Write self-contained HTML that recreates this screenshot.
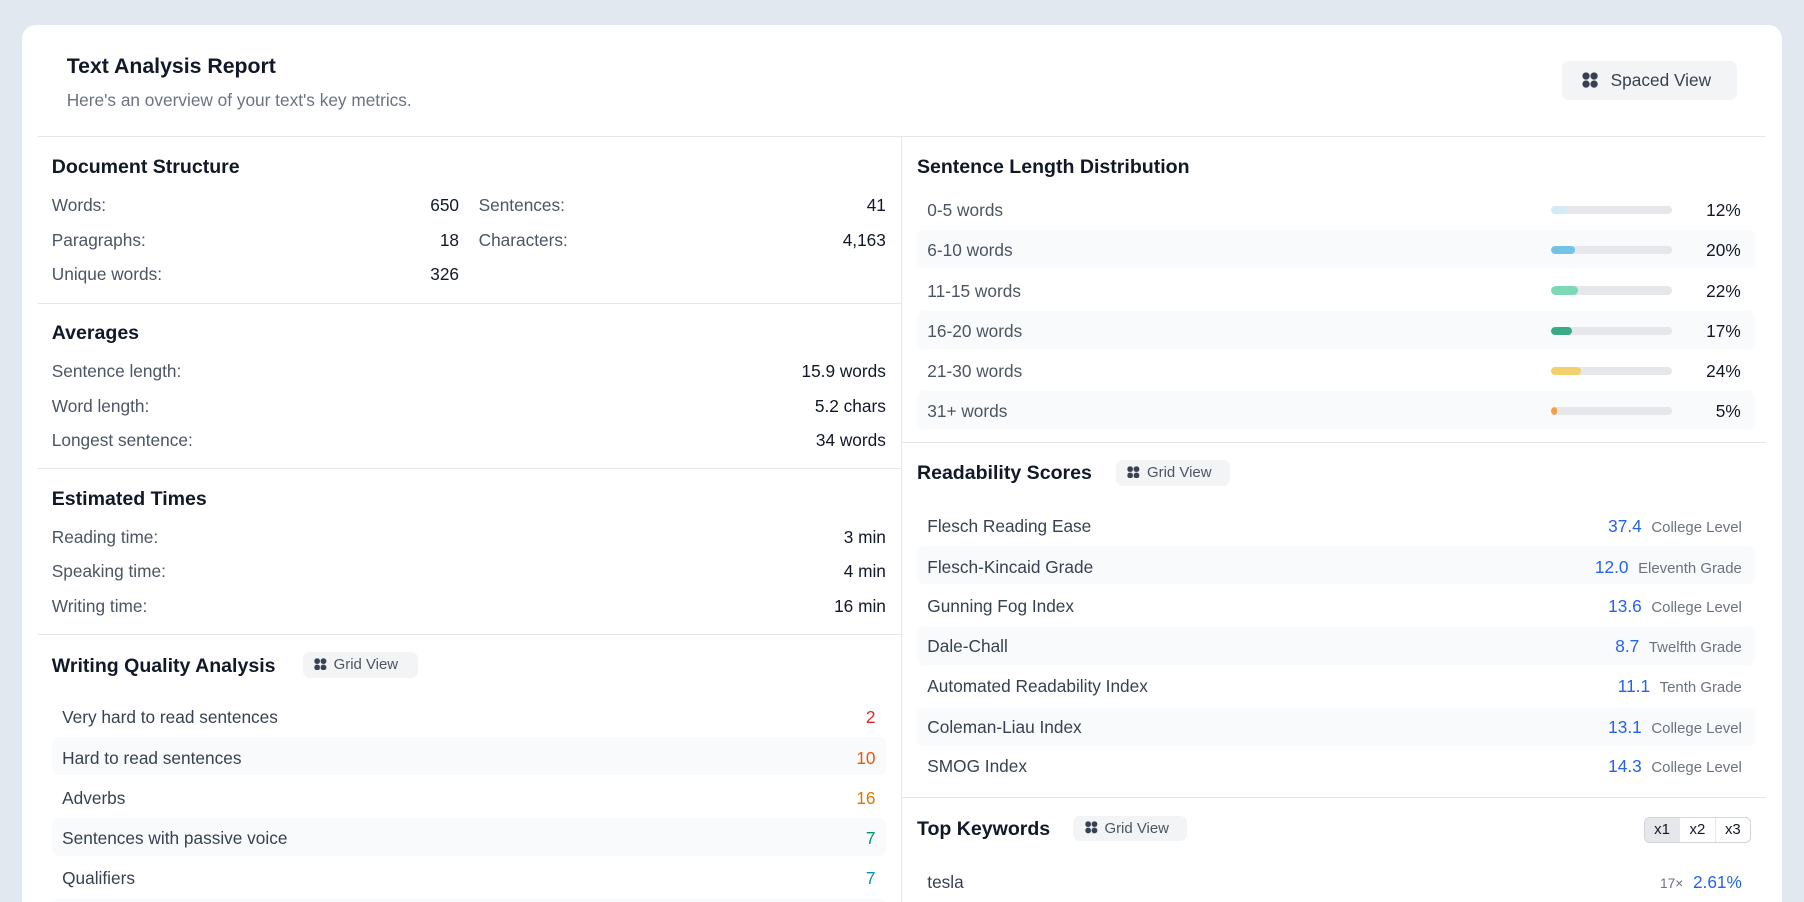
<!DOCTYPE html>
<html style="overflow:hidden;height:902px"><head><meta charset="utf-8"><style>
html,body{margin:0;padding:0;}
body{width:1568px;height:784px;overflow:hidden;background:#e2e8f0;font-family:"Liberation Sans",Arial,sans-serif;zoom:1.15051;position:relative;}
.card{position:absolute;left:19px;top:22px;width:1530px;height:762px;background:#fff;border-radius:12px 12px 0 0;}
.a{position:absolute;white-space:nowrap;line-height:20px;height:20px;margin-top:1px;}
.t{font-size:17px;font-weight:bold;color:#111827;}
.l{font-size:15px;color:#4b5563;}
.v{font-size:15px;color:#111827;text-align:right;}
.hr{position:absolute;height:1px;background:#e5e7eb;}
.rowbg{position:absolute;background:#f9fafb;border-radius:6px;height:33px;}
.badge{position:absolute;background:#f3f4f6;border-radius:6px;font-size:13px;color:#4b5563;line-height:22px;height:22px;}
.ic{display:inline-block;width:11px;height:11px;vertical-align:-1px;margin-right:6px;background:
radial-gradient(circle,#374151 2.4px,transparent 2.6px) 0 0/5.5px 5.5px;}
.bar{position:absolute;height:7px;width:105px;background:#e5e7eb;border-radius:4px;overflow:hidden;}
.bar i{display:block;height:100%;border-radius:4px;}
.blue{color:#2563eb;}
.g{font-size:13px;color:#6b7280;}
</style></head><body>
<div class="card"></div>
<div class="a t" style="left:58px;top:47px;font-size:18.5px;">Text Analysis Report</div>
<div class="a" style="left:58px;top:76px;font-size:15px;color:#6b7280;">Here's an overview of your text's key metrics.</div>
<div class="badge" style="left:1358px;top:53px;width:152px;height:34px;line-height:34px;font-size:15px;color:#374151;"><span style="margin-left:17px"></span><span class="ic" style="width:14px;height:14px;background-size:7px 7px;background-image:radial-gradient(circle,#374151 3px,transparent 3.3px);margin-right:11px;vertical-align:-2px"></span>Spaced View</div>
<div class="hr" style="left:33px;top:118px;width:1502px"></div>
<div style="position:absolute;left:783px;top:118px;width:1px;height:666px;background:#e5e7eb"></div>

<div class="a t" style="left:45px;top:135px">Document Structure</div>
<div class="a l" style="left:45px;top:168px">Words:</div><div class="a v" style="left:300px;width:99px;top:168px">650</div>
<div class="a l" style="left:416px;top:168px">Sentences:</div><div class="a v" style="left:670px;width:100px;top:168px">41</div>
<div class="a l" style="left:45px;top:198px">Paragraphs:</div><div class="a v" style="left:300px;width:99px;top:198px">18</div>
<div class="a l" style="left:416px;top:198px">Characters:</div><div class="a v" style="left:670px;width:100px;top:198px">4,163</div>
<div class="a l" style="left:45px;top:228px">Unique words:</div><div class="a v" style="left:300px;width:99px;top:228px">326</div>
<div class="hr" style="left:33px;top:263px;width:750px"></div>

<div class="a t" style="left:45px;top:279px">Averages</div>
<div class="a l" style="left:45px;top:312px">Sentence length:</div><div class="a v" style="left:570px;width:200px;top:312px">15.9 words</div>
<div class="a l" style="left:45px;top:342px">Word length:</div><div class="a v" style="left:570px;width:200px;top:342px">5.2 chars</div>
<div class="a l" style="left:45px;top:372px">Longest sentence:</div><div class="a v" style="left:570px;width:200px;top:372px">34 words</div>
<div class="hr" style="left:33px;top:407px;width:750px"></div>

<div class="a t" style="left:45px;top:423px">Estimated Times</div>
<div class="a l" style="left:45px;top:456px">Reading time:</div><div class="a v" style="left:570px;width:200px;top:456px">3 min</div>
<div class="a l" style="left:45px;top:486px">Speaking time:</div><div class="a v" style="left:570px;width:200px;top:486px">4 min</div>
<div class="a l" style="left:45px;top:516px">Writing time:</div><div class="a v" style="left:570px;width:200px;top:516px">16 min</div>
<div class="hr" style="left:33px;top:551px;width:750px"></div>

<div class="a t" style="left:45px;top:568px">Writing Quality Analysis</div>
<div class="badge" style="left:263px;top:567px;width:100px;"><span style="margin-left:10px"></span><span class="ic"></span>Grid View</div>
<div class="rowbg" style="left:45px;top:641px;width:725px"></div>
<div class="rowbg" style="left:45px;top:711px;width:725px"></div>
<div class="rowbg" style="left:45px;top:781px;width:725px;height:3px;border-radius:6px 6px 0 0"></div>
<div class="a l" style="left:54px;top:613px;color:#374151">Very hard to read sentences</div><div class="a v" style="left:660px;width:101px;top:613px;color:#dc2626">2</div>
<div class="a l" style="left:54px;top:648px;color:#374151">Hard to read sentences</div><div class="a v" style="left:660px;width:101px;top:648px;color:#ea580c">10</div>
<div class="a l" style="left:54px;top:683px;color:#374151">Adverbs</div><div class="a v" style="left:660px;width:101px;top:683px;color:#d97706">16</div>
<div class="a l" style="left:54px;top:718px;color:#374151">Sentences with passive voice</div><div class="a v" style="left:660px;width:101px;top:718px;color:#059669">7</div>
<div class="a l" style="left:54px;top:753px;color:#374151">Qualifiers</div><div class="a v" style="left:660px;width:101px;top:753px;color:#0891b2">7</div>

<div class="a t" style="left:797px;top:135px">Sentence Length Distribution</div>
<div class="rowbg" style="left:797px;top:200px;width:728px"></div>
<div class="rowbg" style="left:797px;top:270px;width:728px"></div>
<div class="rowbg" style="left:797px;top:340px;width:728px"></div>
<div class="a l" style="left:806px;top:172px">0-5 words</div><div class="bar" style="left:1348px;top:179px"><i style="width:14px;background:#d3ebf5"></i></div><div class="a v" style="left:1413px;width:100px;top:172px">12%</div>
<div class="a l" style="left:806px;top:207px">6-10 words</div><div class="bar" style="left:1348px;top:214px"><i style="width:21px;background:#74c3e6"></i></div><div class="a v" style="left:1413px;width:100px;top:207px">20%</div>
<div class="a l" style="left:806px;top:242px">11-15 words</div><div class="bar" style="left:1348px;top:249px"><i style="width:24px;background:#7dd8b5"></i></div><div class="a v" style="left:1413px;width:100px;top:242px">22%</div>
<div class="a l" style="left:806px;top:277px">16-20 words</div><div class="bar" style="left:1348px;top:284px"><i style="width:18px;background:#3bab86"></i></div><div class="a v" style="left:1413px;width:100px;top:277px">17%</div>
<div class="a l" style="left:806px;top:312px">21-30 words</div><div class="bar" style="left:1348px;top:319px"><i style="width:26px;background:#f1d06e"></i></div><div class="a v" style="left:1413px;width:100px;top:312px">24%</div>
<div class="a l" style="left:806px;top:347px">31+ words</div><div class="bar" style="left:1348px;top:354px"><i style="width:5px;background:#f59e42"></i></div><div class="a v" style="left:1413px;width:100px;top:347px">5%</div>
<div class="hr" style="left:784px;top:384px;width:751px"></div>

<div class="a t" style="left:797px;top:401px">Readability Scores</div>
<div class="badge" style="left:970px;top:400px;width:99px;"><span style="margin-left:10px"></span><span class="ic"></span>Grid View</div>
<div class="rowbg" style="left:797px;top:475px;width:728px"></div>
<div class="rowbg" style="left:797px;top:545px;width:728px"></div>
<div class="rowbg" style="left:797px;top:615px;width:728px"></div>
<div class="a l" style="left:806px;top:447px;color:#374151">Flesch Reading Ease</div><div class="a" style="right:54px;top:447px;font-size:15px"><span class="blue">37.4</span>&nbsp; <span class="g">College Level</span></div>
<div class="a l" style="left:806px;top:482px;color:#374151">Flesch-Kincaid Grade</div><div class="a" style="right:54px;top:482px;font-size:15px"><span class="blue">12.0</span>&nbsp; <span class="g">Eleventh Grade</span></div>
<div class="a l" style="left:806px;top:516px;color:#374151">Gunning Fog Index</div><div class="a" style="right:54px;top:516px;font-size:15px"><span class="blue">13.6</span>&nbsp; <span class="g">College Level</span></div>
<div class="a l" style="left:806px;top:551px;color:#374151">Dale-Chall</div><div class="a" style="right:54px;top:551px;font-size:15px"><span class="blue">8.7</span>&nbsp; <span class="g">Twelfth Grade</span></div>
<div class="a l" style="left:806px;top:586px;color:#374151">Automated Readability Index</div><div class="a" style="right:54px;top:586px;font-size:15px"><span class="blue">11.1</span>&nbsp; <span class="g">Tenth Grade</span></div>
<div class="a l" style="left:806px;top:621px;color:#374151">Coleman-Liau Index</div><div class="a" style="right:54px;top:621px;font-size:15px"><span class="blue">13.1</span>&nbsp; <span class="g">College Level</span></div>
<div class="a l" style="left:806px;top:655px;color:#374151">SMOG Index</div><div class="a" style="right:54px;top:655px;font-size:15px"><span class="blue">14.3</span>&nbsp; <span class="g">College Level</span></div>
<div class="hr" style="left:784px;top:693px;width:751px"></div>

<div class="a t" style="left:797px;top:710px">Top Keywords</div>
<div class="badge" style="left:933px;top:709px;width:99px;"><span style="margin-left:10px"></span><span class="ic"></span>Grid View</div>
<div style="position:absolute;left:1429px;top:710px;width:91px;height:21px;border:1px solid #d1d5db;border-radius:5px;overflow:hidden;display:flex;font-size:13px;line-height:21px;text-align:center;color:#111827">
<div style="width:30px;background:#e5e7eb;border-right:1px solid #e5e7eb">x1</div><div style="width:31px;border-right:1px solid #e5e7eb">x2</div><div style="width:30px">x3</div></div>
<div class="a l" style="left:806px;top:756px;color:#374151">tesla</div>
<div class="a" style="right:54px;top:756px;font-size:15px"><span class="g" style="font-size:12px">17×</span>&nbsp; <span class="blue">2.61%</span></div>
</body></html>
